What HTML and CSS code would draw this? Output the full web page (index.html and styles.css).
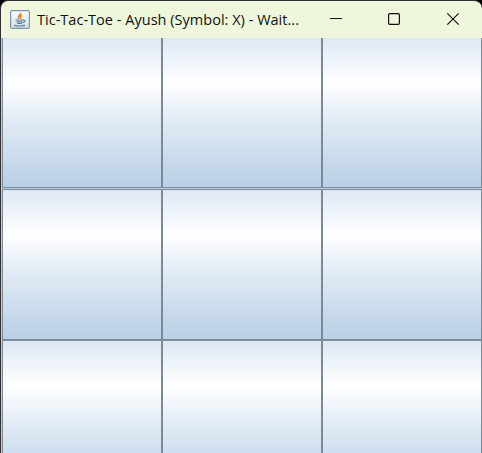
FILE: index.html
```
<!DOCTYPE html>
<html lang="en">
<head>
<meta charset="utf-8">
<title>Tic-Tac-Toe</title>
<link rel="stylesheet" href="styles.css">
</head>
<body>
<div class="window">
  <header class="titlebar">
    <svg class="app-icon" width="20" height="19" viewBox="0 0 20 19">
      <defs><linearGradient id="tile" x1="0" y1="0" x2="0" y2="1"><stop offset="0" stop-color="#fff"/><stop offset="1" stop-color="#d5dce2"/></linearGradient></defs>
      <rect x=".6" y=".6" width="18.8" height="17.8" rx="1.5" fill="url(#tile)" stroke="#8095a9" stroke-width="1.2"/>
      <path d="M10.4 2.8c1.2 2-3.7 3-1.4 6M12 5c-2.5 1.3-1.5 2-1 3.8" fill="none" stroke="#e58a45" stroke-width="1.7"/>
      <path d="M5.5 10h7.3M6.5 11.9h5.9M7 13.5h5M4.2 15.3q5.5 1.5 10.8-.2M12.8 10.2c3.2-.6 2.4 2-.2 2.4" fill="none" stroke="#58809f" stroke-width="1.2"/>
    </svg>
    <span class="title">Tic-Tac-Toe - Ayush (Symbol: X) - Wait...</span>
    <svg class="controls" width="132" height="14" viewBox="0 0 132 14" fill="none" stroke="#111" stroke-width="1.2">
      <path d="M1 6.5h12" stroke-width="1"/>
      <rect x="59.6" y="1.6" width="10.8" height="10.8" rx="1.3"/>
      <path d="M118.3 1.3l11.4 11.4M129.7 1.3l-11.4 11.4"/>
    </svg>
  </header>
  <main class="board">
    <div class="cell top"></div><div class="cell top"></div><div class="cell top"></div>
    <div class="cell"></div><div class="cell"></div><div class="cell"></div>
    <div class="cell"></div><div class="cell"></div><div class="cell"></div>
  </main>
</div>
</body>
</html>
```
FILE: styles.css
```
body {
  margin: 0;
  background: #000;
  overflow: hidden;
}
.window {
  box-sizing: border-box;
  height: 453px;
  border-top: 1px solid #332f30;
  border-left: 1px solid #332f30;
  border-radius: 8px 8px 0 0;
  background: #eef7dc;
  overflow: hidden;
}
.titlebar {
  display: flex;
  align-items: center;
  box-sizing: border-box;
  height: 37px;
  padding: 0 21px 1px 9px;
}
.title {
  margin-left: 7px;
  padding-top: 2px;
  width: 264px;
  font: 14.5px/20px "Open Sans", "Noto Sans", sans-serif;
  letter-spacing: 0.02px;
  white-space: nowrap;
  color: #111;
}
.controls {
  margin-left: auto;
}
.board {
  display: grid;
  grid-template-columns: repeat(3, 160px);
  grid-template-rows: 150px 1px 151px 151px;
  padding-left: 1px;
  margin-right: -1px;
  background: #b8cfe5;
}
.cell {
  box-sizing: border-box;
  border: 1px solid #7a8a99;
  background: linear-gradient(#dde8f3, #fff 30%, #dde8f3 60%, #b8cfe5);
}
.top {
  border-top: 0;
}
.cell:nth-child(n + 4):nth-child(-n + 6) {
  grid-row: 3;
}
.cell:nth-child(n + 7) {
  grid-row: 4;
}
```
